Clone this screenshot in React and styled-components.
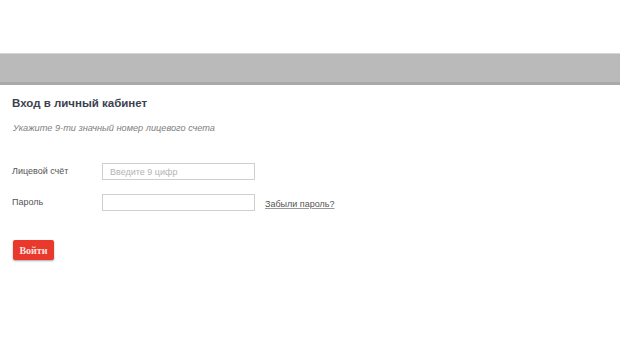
import styled, { createGlobalStyle } from "styled-components";

const Global = createGlobalStyle`
  body {
    margin: 0;
    background: #fff;
    font-family: "Liberation Sans", Arial, sans-serif;
  }
`;

const Page = styled.div`
  width: 620px;
  height: 343px;
  padding-top: 53px;
  box-sizing: border-box;
`;

const Bar = styled.div`
  height: 28px;
  background: #bababa;
  border-top: 1px solid #d6d6d6;
  border-bottom: 3px solid #a9a9a9;
`;

const Content = styled.div`
  padding: 11px 12px 0 12px;
`;

const Title = styled.h1`
  margin: 0;
  font-size: 11.5px;
  font-weight: bold;
  color: #3b4150;
  line-height: 14px;
`;

const Hint = styled.p`
  margin: 12px 0 0 1px;
  font-size: 9.2px;
  font-style: italic;
  color: #808080;
  line-height: 12px;
`;

const Form = styled.div`
  margin-top: 29px;
  display: grid;
  grid-template-columns: 90px 153px auto;
  row-gap: 14px;
  align-items: center;
`;

const Label = styled.label`
  font-size: 9px;
  color: #555;
  padding-bottom: 2px;
`;

const Input = styled.input`
  width: 153px;
  height: 17px;
  box-sizing: border-box;
  border: 1px solid #cfcfcf;
  padding: 0 7px;
  font-family: "Liberation Sans", Arial, sans-serif;
  font-size: 9px;
  color: #333;
  outline: none;
  &::placeholder {
    color: #b4b4b4;
  }
`;

const Forgot = styled.a`
  margin-left: 10px;
  font-size: 9px;
  color: #555;
  text-decoration: underline;
  text-decoration-color: #999;
  padding-top: 2px;
`;

const Submit = styled.button`
  margin: 29px 0 0 1px;
  width: 41px;
  height: 20px;
  background: #e8392c;
  border: none;
  border-radius: 2px;
  box-shadow: 0 1px 2px rgba(0, 0, 0, 0.35);
  color: #fbe3e0;
  font-family: "Liberation Serif", "Times New Roman", serif;
  font-weight: bold;
  font-size: 10px;
  padding: 0;
  cursor: pointer;
`;

const App = () => {
  return (
    <Page>
      <Global />
      <Bar />
      <Content>
        <Title>Вход в личный кабинет</Title>
        <Hint>Укажите 9-ти значный номер лицевого счета</Hint>
        <Form>
          <Label>Лицевой счёт</Label>
          <Input placeholder="Введите 9 цифр" />
          <span />
          <Label>Пароль</Label>
          <Input type="password" />
          <Forgot href="#">Забыли пароль?</Forgot>
        </Form>
        <Submit>Войти</Submit>
      </Content>
    </Page>
  );
};

export default App;
